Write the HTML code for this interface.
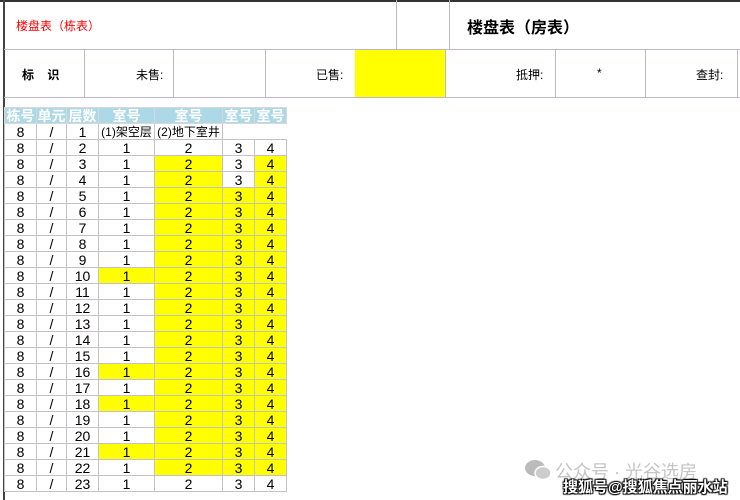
<!DOCTYPE html>
<html><head><meta charset="utf-8"><style>
*{margin:0;padding:0;box-sizing:border-box}
body{width:740px;height:500px;background:#fff;position:relative;overflow:hidden;font-family:"Liberation Sans","Noto Sans CJK SC",sans-serif;color:#000}
.a{position:absolute}
.vl{position:absolute;width:1px;background:#c0b8c0}
.hl{position:absolute;height:1px;background:#c0b8c0}
table{position:absolute;left:4px;top:107px;border-collapse:collapse;table-layout:fixed;font-size:14px}
td{height:16px;border:1px solid #c8c0c8;text-align:center;padding:0;line-height:14px;white-space:nowrap;overflow:hidden}
tr.h td{background:#add8e6;color:#fff;font-weight:bold;font-size:14px;border-color:#d8d8d8}
.y{background:#ffff00}
</style></head><body>
<div class="a" style="left:0;top:0;width:740px;height:2px;background:#333"></div>
<div class="a" style="left:3px;top:0;width:2px;height:500px;background:#444"></div>
<div class="hl" style="left:4px;top:49px;width:736px"></div>
<div class="hl" style="left:4px;top:97px;width:736px"></div>
<div class="vl" style="left:396px;top:0;height:49px"></div>
<div class="vl" style="left:449px;top:0;height:49px"></div>
<div class="a" style="left:16px;top:17px;font-size:12px;color:#f00">楼盘表（栋表）</div>
<div class="a" style="left:467px;top:14px;font-size:16px;font-weight:bold">楼盘表（房表）</div>
<div class="vl" style="left:84px;top:49px;height:48px"></div>
<div class="vl" style="left:173px;top:49px;height:48px"></div>
<div class="vl" style="left:265px;top:49px;height:48px"></div>
<div class="a" style="left:355px;top:50px;width:90px;height:47px;background:#ff0"></div>
<div class="vl" style="left:445px;top:49px;height:48px"></div>
<div class="vl" style="left:555px;top:49px;height:48px"></div>
<div class="vl" style="left:645px;top:49px;height:48px"></div>
<div class="vl" style="left:737px;top:49px;height:48px"></div>
<div class="a" style="left:22px;top:66px;font-size:12px;font-weight:bold">标&nbsp;&nbsp;&nbsp;&nbsp;识</div>
<div class="a" style="left:136px;top:66px;font-size:12px">未售:</div>
<div class="a" style="left:316px;top:66px;font-size:12px">已售:</div>
<div class="a" style="left:516px;top:66px;font-size:12px">抵押:</div>
<div class="a" style="left:597px;top:66px;font-size:12px">*</div>
<div class="a" style="left:696px;top:66px;font-size:12px">查封:</div>
<table>
<colgroup><col style="width:32px"><col style="width:30px"><col style="width:32px"><col style="width:56px"><col style="width:68px"><col style="width:32px"><col style="width:32px"></colgroup>
<tr class="h"><td>栋号</td><td>单元</td><td>层数</td><td>室号</td><td>室号</td><td>室号</td><td>室号</td></tr>
<tr><td>8</td><td>/</td><td>1</td><td style="font-size:12px">(1)架空层</td><td style="font-size:12px">(2)地下室井</td><td style="border:none;border-bottom:1px solid #c8c0c8"></td><td style="border:none;border-bottom:1px solid #c8c0c8"></td></tr>
<tr><td>8</td><td>/</td><td>2</td><td>1</td><td>2</td><td>3</td><td>4</td></tr>
<tr><td>8</td><td>/</td><td>3</td><td>1</td><td class="y">2</td><td>3</td><td class="y">4</td></tr>
<tr><td>8</td><td>/</td><td>4</td><td>1</td><td class="y">2</td><td>3</td><td class="y">4</td></tr>
<tr><td>8</td><td>/</td><td>5</td><td>1</td><td class="y">2</td><td class="y">3</td><td class="y">4</td></tr>
<tr><td>8</td><td>/</td><td>6</td><td>1</td><td class="y">2</td><td class="y">3</td><td class="y">4</td></tr>
<tr><td>8</td><td>/</td><td>7</td><td>1</td><td class="y">2</td><td class="y">3</td><td class="y">4</td></tr>
<tr><td>8</td><td>/</td><td>8</td><td>1</td><td class="y">2</td><td class="y">3</td><td class="y">4</td></tr>
<tr><td>8</td><td>/</td><td>9</td><td>1</td><td class="y">2</td><td class="y">3</td><td class="y">4</td></tr>
<tr><td>8</td><td>/</td><td>10</td><td class="y">1</td><td class="y">2</td><td class="y">3</td><td class="y">4</td></tr>
<tr><td>8</td><td>/</td><td>11</td><td>1</td><td class="y">2</td><td class="y">3</td><td class="y">4</td></tr>
<tr><td>8</td><td>/</td><td>12</td><td>1</td><td class="y">2</td><td class="y">3</td><td class="y">4</td></tr>
<tr><td>8</td><td>/</td><td>13</td><td>1</td><td class="y">2</td><td class="y">3</td><td class="y">4</td></tr>
<tr><td>8</td><td>/</td><td>14</td><td>1</td><td class="y">2</td><td class="y">3</td><td class="y">4</td></tr>
<tr><td>8</td><td>/</td><td>15</td><td>1</td><td class="y">2</td><td class="y">3</td><td class="y">4</td></tr>
<tr><td>8</td><td>/</td><td>16</td><td class="y">1</td><td class="y">2</td><td class="y">3</td><td class="y">4</td></tr>
<tr><td>8</td><td>/</td><td>17</td><td>1</td><td class="y">2</td><td class="y">3</td><td class="y">4</td></tr>
<tr><td>8</td><td>/</td><td>18</td><td class="y">1</td><td class="y">2</td><td class="y">3</td><td class="y">4</td></tr>
<tr><td>8</td><td>/</td><td>19</td><td>1</td><td class="y">2</td><td class="y">3</td><td class="y">4</td></tr>
<tr><td>8</td><td>/</td><td>20</td><td>1</td><td class="y">2</td><td class="y">3</td><td class="y">4</td></tr>
<tr><td>8</td><td>/</td><td>21</td><td class="y">1</td><td class="y">2</td><td class="y">3</td><td class="y">4</td></tr>
<tr><td>8</td><td>/</td><td>22</td><td>1</td><td class="y">2</td><td class="y">3</td><td class="y">4</td></tr>
<tr><td>8</td><td>/</td><td>23</td><td>1</td><td>2</td><td>3</td><td>4</td></tr>
</table>
<svg class="a" style="left:524px;top:458px" width="28" height="24" viewBox="0 0 28 24"><ellipse cx="11" cy="10" rx="10" ry="8" fill="#bbb"/><ellipse cx="19" cy="15" rx="8" ry="6.5" fill="#ccc" stroke="#fff" stroke-width="1.5"/></svg>
<div class="a" style="left:555px;top:458px;font-size:18px;color:#c4c4c4">公众号 · 光谷选房</div>
<div class="a" style="left:563px;top:476px;font-size:15px;font-weight:bold;color:#fff;text-shadow:1px 1px 1px #000,-1px -1px 1px #000,1px -1px 1px #000,-1px 1px 1px #000">搜狐号@搜狐焦点丽水站</div>
</body></html>
